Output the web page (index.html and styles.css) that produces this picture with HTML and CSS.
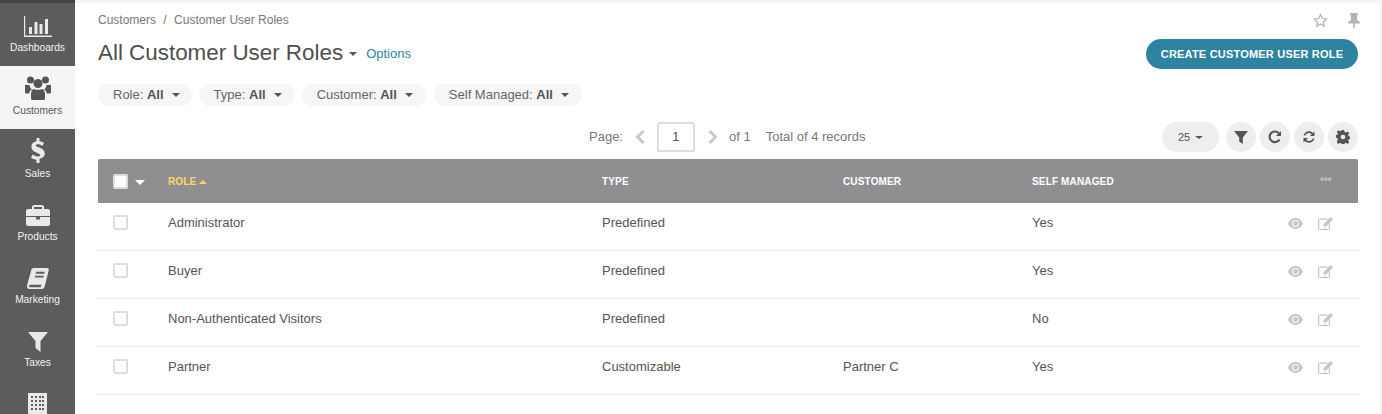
FILE: index.html
```html
<!DOCTYPE html>
<html lang="en">
<head>
    <meta charset="UTF-8">
    <title>All Customer User Roles</title>
    <link rel="stylesheet" href="styles.css">
</head>
<body>
    <nav class="sidebar">
        <a class="side-item" href="#">
            <svg class="side-icon" width="28" height="21" viewBox="0 0 28 21"><path d="M0 0h1.200v19.500H28V21H0z"/><path d="M5 11h3v7H5zM10.500 6h3v12h-3zM15.500 8h3v10h-3zM21 3h3v15h-3z"/></svg>
            <span>Dashboards</span>
        </a>
        <a class="side-item active" href="#">
            <svg class="side-icon" width="26" height="24" viewBox="0 0 26 24"><circle cx="5.500" cy="4" r="3.500"/><circle cx="20.500" cy="4" r="3.500"/><circle cx="13" cy="7.500" r="4.500"/><path d="M0 9h4.500c.5 2 1 3.500 2.500 4.500-2 1-2.500 2-2.800 4H1.500C.5 17.500 0 17 0 16zM26 9h-4.500c-.5 2-1 3.500-2.500 4.500 2 1 2.500 2 2.800 4h2.700c1 0 1.500-.5 1.500-1.500z"/><path d="M8.500 13c1.500 1 7.500 1 9 0 1.500 1 2.500 2.500 2.500 5v4.500c0 1-1 1.500-2 1.500H8c-1 0-2-.5-2-1.500V18c0-2.500 1-4 2.500-5z"/></svg>
            <span>Customers</span>
        </a>
        <a class="side-item" href="#">
            <svg class="side-icon" width="14" height="25" viewBox="0 0 14 25"><path d="M5.500 0h3v3.200c1.700.2 3.200.8 4.500 1.600l-1.500 3C10 6.900 8.500 6.300 6.800 6.300c-1.300 0-2 .5-2 1.300 0 2.200 9 1.800 9 8 0 2.800-2 4.700-5.300 5.200V25h-3v-3.200c-2-.2-4-1.100-5.500-2.400l1.800-2.800c1.500 1.200 3.200 2 5 2 1.500 0 2.400-.6 2.400-1.600C9.200 14.500.4 15 .4 8.400c0-2.700 2-4.700 5.100-5.200z"/></svg>
            <span>Sales</span>
        </a>
        <a class="side-item" href="#">
            <svg class="side-icon" width="24" height="21" viewBox="0 0 24 21"><path d="M8 0h8c1 0 2 1 2 2v2h4c1 0 2 1 2 2v5H0V6c0-1 1-2 2-2h4V2c0-1 1-2 2-2zm0 2v2h8V2z" fill-rule="evenodd"/><path d="M0 12h10v2.500h4V12h10v7c0 1-1 2-2 2H2c-1 0-2-1-2-2z"/></svg>
            <span>Products</span>
        </a>
        <a class="side-item" href="#">
            <svg class="side-icon" width="22" height="21" viewBox="0 0 23 22"><path d="M7 0h14c1.500 0 2 1 1.700 2.500l-4 16c-.4 1.500-1.200 3.500-3.200 3.500H3c-2 0-3-1-3-3 0-.7.200-1.500.4-2.300L4.500 2C4.800.8 5.800 0 7 0zm2.500 4-.5 2h9l.5-2zm-1 4-.5 2h9l.5-2zM3.500 17.500c-.8 0-1.300.4-1.300 1.300s.5 1.400 1.300 1.400h10.700c.4-.8.600-1.800.8-2.700z" fill-rule="evenodd"/></svg>
            <span>Marketing</span>
        </a>
        <a class="side-item" href="#">
            <svg class="side-icon" width="20" height="20" viewBox="0 0 20 20"><path d="M0 0h20l-7.500 9v11l-5-4V9z"/></svg>
            <span>Taxes</span>
        </a>
        <a class="side-item side-last" href="#">
            <svg class="side-icon" width="19" height="30" viewBox="0 0 19 30"><path fill-rule="evenodd" d="M0 0h19v30H0zm3 3v2h2V3zm4 0v2h2V3zm4 0v2h2V3zm3 0v2h2V3zM3 7v2h2V7zm4 0v2h2V7zm4 0v2h2V7zm3 0v2h2V7zM3 11v2h2v-2zm4 0v2h2v-2zm4 0v2h2v-2zm3 0v2h2v-2zM3 15v2h2v-2zm4 0v2h2v-2zm4 0v2h2v-2zm3 0v2h2v-2z"/></svg>
        </a>
    </nav>

    <main class="content">
        <div class="top-row">
            <div class="breadcrumbs">Customers <i>/</i> Customer User Roles</div>
            <div class="top-icons">
                <svg width="15" height="15" viewBox="0 0 24 24" fill="none" stroke="#b4b4b4" stroke-width="2"><path d="M12 2.500l2.900 6.300 6.900.8-5.100 4.700 1.400 6.800-6.100-3.400-6.100 3.400 1.400-6.800-5.100-4.700 6.900-.8z"/></svg>
                <svg width="12" height="15" viewBox="0 0 12 15" fill="#b4b4b4"><path d="M2 0h8v1.500L9 2.500V7c1.500 1 3 1.500 3 3.500H6.800V15h-1.600v-4.500H0C0 8.500 1.500 8 3 7V2.500L2 1.500z"/></svg>
            </div>
        </div>

        <div class="title-row">
            <h1>All Customer User Roles</h1>
            <span class="caret title-caret"></span>
            <a class="options" href="#">Options</a>
            <a class="create-btn" href="#">CREATE CUSTOMER USER ROLE</a>
        </div>

        <div class="filters">
            <div class="filter">Role: <b>All</b><span class="caret"></span></div>
            <div class="filter">Type: <b>All</b><span class="caret"></span></div>
            <div class="filter">Customer: <b>All</b><span class="caret"></span></div>
            <div class="filter">Self Managed: <b>All</b><span class="caret"></span></div>
        </div>

        <div class="toolbar">
            <div class="pager">
                <span>Page:</span>
                <svg class="chev" width="11" height="14" viewBox="0 0 11 14"><path d="M8.500 1 2.500 7l6 6" /></svg>
                <span class="page-box">1</span>
                <svg class="chev" width="11" height="14" viewBox="0 0 11 14"><path d="M2.500 1l6 6-6 6" /></svg>
                <span>of 1</span>
                <span class="total">Total of 4 records</span>
            </div>
            <div class="tools">
                <div class="per-page">25<span class="caret"></span></div>
                <div class="round-btn"><svg width="14" height="14" viewBox="0 0 14 14"><path d="M0 1h14L8.800 7.500V14l-3.600-2.500v-4z"/></svg></div>
                <div class="round-btn"><svg width="14" height="14" viewBox="0 0 14 14"><path class="arc" d="M11.500 9.500A5.300 5.300 0 1 1 10.800 3.200"/><path d="M13 1v5H8z"/></svg></div>
                <div class="round-btn"><svg width="14" height="14" viewBox="0 0 14 14"><path d="M1.500 5.500C2.200 3 4.400 1.300 7 1.300c1.600 0 3 .6 4 1.700L12.500 1.500V6H8l1.700-1.700C9 3.500 8.100 3.100 7 3.100c-1.800 0-3.200 1-3.700 2.400zM12.500 8.500C11.800 11 9.600 12.700 7 12.700c-1.600 0-3-.6-4-1.700l-1.500 1.500V8H6l-1.700 1.700c.7.800 1.600 1.200 2.700 1.200 1.800 0 3.200-1 3.700-2.400z"/></svg></div>
                <div class="round-btn"><svg width="14" height="14" viewBox="0 0 24 24"><path fill-rule="evenodd" d="M10 0h4l.7 3.400 2.300 1 2.900-1.900 2.800 2.800-1.900 2.900 1 2.300 3.200.7v4l-3.200.7-1 2.300 1.900 2.900-2.800 2.800-2.900-1.900-2.300 1-.7 3H10l-.7-3-2.300-1-2.900 1.900-2.800-2.800L3.200 16l-1-2.300L-1 13V9l3.200-.7 1-2.300-1.900-2.900L4.100 .3l2.900 1.900 2.300-1zM12 8a4 4 0 1 0 0 8 4 4 0 0 0 0-8z"/></svg></div>
            </div>
        </div>

        <table class="grid">
            <thead>
                <tr>
                    <th class="col-check"><span class="check head-check"></span><span class="caret white-caret"></span></th>
                    <th class="col-role sorted">ROLE<span class="sort-up"></span></th>
                    <th class="col-type">TYPE</th>
                    <th class="col-customer">CUSTOMER</th>
                    <th class="col-self">SELF MANAGED</th>
                    <th class="col-actions"><span class="dots">•••</span></th>
                </tr>
            </thead>
            <tbody>
                <tr>
                    <td><span class="check"></span></td>
                    <td>Administrator</td>
                    <td>Predefined</td>
                    <td></td>
                    <td>Yes</td>
                    <td class="actions">
                        <svg width="15" height="11" viewBox="0 0 15 11"><path fill-rule="evenodd" d="M7.500 0C11 0 13.700 2.500 15 5.500 13.700 8.500 11 11 7.500 11S1.300 8.500 0 5.500C1.300 2.500 4 0 7.500 0zm0 2a3.500 3.500 0 1 0 0 7 3.500 3.500 0 0 0 0-7z"/><circle cx="7.500" cy="5.500" r="2.500"/></svg>
                        <svg width="15" height="13" viewBox="0 0 15 13"><path d="M2 1.500h8L8.800 2.700H2.200c-.6 0-1 .4-1 1v7c0 .6.400 1 1 1h7.600c.6 0 1-.4 1-1V7.500L12 6.300V11c0 1.100-.9 2-2 2H2c-1.100 0-2-.9-2-2V3.500c0-1.100.9-2 2-2z"/><path d="M12.500 0 15 2.500 8 9.500H5.500V7z"/></svg>
                    </td>
                </tr>
                <tr>
                    <td><span class="check"></span></td>
                    <td>Buyer</td>
                    <td>Predefined</td>
                    <td></td>
                    <td>Yes</td>
                    <td class="actions">
                        <svg width="15" height="11" viewBox="0 0 15 11"><path fill-rule="evenodd" d="M7.500 0C11 0 13.700 2.500 15 5.500 13.700 8.500 11 11 7.500 11S1.300 8.500 0 5.500C1.300 2.500 4 0 7.500 0zm0 2a3.500 3.500 0 1 0 0 7 3.500 3.500 0 0 0 0-7z"/><circle cx="7.500" cy="5.500" r="2.500"/></svg>
                        <svg width="15" height="13" viewBox="0 0 15 13"><path d="M2 1.500h8L8.800 2.700H2.200c-.6 0-1 .4-1 1v7c0 .6.400 1 1 1h7.600c.6 0 1-.4 1-1V7.500L12 6.300V11c0 1.100-.9 2-2 2H2c-1.100 0-2-.9-2-2V3.500c0-1.100.9-2 2-2z"/><path d="M12.500 0 15 2.500 8 9.500H5.500V7z"/></svg>
                    </td>
                </tr>
                <tr>
                    <td><span class="check"></span></td>
                    <td>Non-Authenticated Visitors</td>
                    <td>Predefined</td>
                    <td></td>
                    <td>No</td>
                    <td class="actions">
                        <svg width="15" height="11" viewBox="0 0 15 11"><path fill-rule="evenodd" d="M7.500 0C11 0 13.700 2.500 15 5.500 13.700 8.500 11 11 7.500 11S1.300 8.500 0 5.500C1.300 2.500 4 0 7.500 0zm0 2a3.500 3.500 0 1 0 0 7 3.500 3.500 0 0 0 0-7z"/><circle cx="7.500" cy="5.500" r="2.500"/></svg>
                        <svg width="15" height="13" viewBox="0 0 15 13"><path d="M2 1.500h8L8.800 2.700H2.200c-.6 0-1 .4-1 1v7c0 .6.400 1 1 1h7.600c.6 0 1-.4 1-1V7.500L12 6.300V11c0 1.100-.9 2-2 2H2c-1.100 0-2-.9-2-2V3.500c0-1.100.9-2 2-2z"/><path d="M12.500 0 15 2.500 8 9.500H5.500V7z"/></svg>
                    </td>
                </tr>
                <tr>
                    <td><span class="check"></span></td>
                    <td>Partner</td>
                    <td>Customizable</td>
                    <td>Partner C</td>
                    <td>Yes</td>
                    <td class="actions">
                        <svg width="15" height="11" viewBox="0 0 15 11"><path fill-rule="evenodd" d="M7.500 0C11 0 13.700 2.500 15 5.500 13.700 8.500 11 11 7.500 11S1.300 8.500 0 5.500C1.300 2.500 4 0 7.500 0zm0 2a3.500 3.500 0 1 0 0 7 3.500 3.500 0 0 0 0-7z"/><circle cx="7.500" cy="5.500" r="2.500"/></svg>
                        <svg width="15" height="13" viewBox="0 0 15 13"><path d="M2 1.500h8L8.800 2.700H2.200c-.6 0-1 .4-1 1v7c0 .6.400 1 1 1h7.600c.6 0 1-.4 1-1V7.500L12 6.300V11c0 1.100-.9 2-2 2H2c-1.100 0-2-.9-2-2V3.500c0-1.100.9-2 2-2z"/><path d="M12.500 0 15 2.500 8 9.500H5.500V7z"/></svg>
                    </td>
                </tr>
            </tbody>
        </table>
    </main>
</body>
</html>
```

FILE: styles.css
```css
html {
    height: 414px;
    overflow: hidden;
}

body {
    margin: 0;
    display: flex;
    height: 414px;
    overflow: hidden;
    background-color: #f5f5f5;
    font-family: "Liberation Sans", Arial, sans-serif;
    font-size: 13px;
    color: #555;
}

.sidebar {
    width: 75px;
    height: 414px;
    flex-shrink: 0;
    padding-top: 3px;
    box-sizing: border-box;
    overflow: hidden;
    background-color: #5c5c5d;
    box-shadow: inset 0 3px 0 #444;
}

.side-item {
    display: flex;
    flex-direction: column;
    align-items: center;
    justify-content: flex-end;
    height: 63px;
    padding-bottom: 12px;
    box-sizing: border-box;
    color: #f2f2f2;
    font-size: 10.2px;
    line-height: 13px;
    text-decoration: none;
}

.side-icon {
    flex-shrink: 0;
    margin-bottom: 4px;
    fill: #e9e9e9;
}

.side-item.active {
    background-color: #f5f5f5;
    color: #555;
}

.side-item.active .side-icon {
    fill: #555;
}

.side-last {
    justify-content: flex-start;
    padding-top: 12px;
}

.content {
    width: 1305px;
    height: 411px;
    margin-top: 3px;
    padding: 0 22px 0 23px;
    box-sizing: border-box;
    overflow: hidden;
    background-color: #fff;
}

.top-row {
    display: flex;
    justify-content: space-between;
    align-items: center;
    height: 24px;
    padding-top: 5px;
}

.breadcrumbs {
    font-size: 12px;
    color: #777;
}

.breadcrumbs i {
    font-style: normal;
    margin: 0 4px;
}

.top-icons {
    display: flex;
    align-items: center;
    gap: 20px;
    margin-right: -2px;
}

.title-row {
    display: flex;
    align-items: center;
    height: 32px;
    margin-top: 6px;
}

h1 {
    margin: -2px 0 0;
    font-size: 22.4px;
    font-weight: normal;
    color: #4f4f4f;
}

.title-caret {
    margin-left: 6px;
    margin-top: -1px;
}

.options {
    margin-left: 9px;
    margin-top: -1px;
    color: #2d839e;
    text-decoration: none;
    font-size: 13px;
}

.create-btn {
    margin-left: auto;
    display: block;
    width: 212px;
    height: 30px;
    border-radius: 15px;
    background-color: #2e84a0;
    color: #fff;
    font-size: 11px;
    font-weight: bold;
    line-height: 30px;
    text-align: center;
    text-decoration: none;
    letter-spacing: .2px;
}

.caret {
    display: inline-block;
    width: 0;
    height: 0;
    border-left: 4px solid transparent;
    border-right: 4px solid transparent;
    border-top: 4px solid #555;
}

.filters {
    display: flex;
    gap: 7px;
    margin-top: 14px;
}

.filter {
    height: 22px;
    padding: 0 13px 0 15px;
    border-radius: 11px;
    background-color: #f6f6f6;
    line-height: 22px;
    color: #666;
}

.filter:first-child {
    padding-right: 12px;
}

.filter:last-child {
    margin-left: 1px;
}

.filter b {
    color: #555;
}

.filter .caret {
    margin-left: 8px;
    vertical-align: 2px;
}

.toolbar {
    display: flex;
    align-items: center;
    height: 30px;
    margin-top: 16px;
    padding-left: 491px;
}

.pager {
    display: flex;
    align-items: center;
    color: #777;
}

.pager > span {
    margin-bottom: 2px;
}

.chev {
    margin: 0 11px 0 12px;
    fill: none;
    stroke: #c9c9c9;
    stroke-width: 3;
}

.pager > .page-box {
    width: 34px;
    height: 26px;
    margin-bottom: 0;
    border: 2px solid #ddd;
    border-radius: 2px;
    line-height: 26px;
    text-align: center;
    color: #5a4a5e;
}

.total {
    margin-left: 15px;
}

.tools {
    display: flex;
    gap: 4px;
    margin-left: auto;
}

.per-page {
    width: 57px;
    height: 30px;
    margin-right: 3px;
    border-radius: 15px;
    background-color: #eee;
    font-size: 11px;
    line-height: 30px;
    text-align: center;
}

.per-page .caret {
    margin-left: 5px;
    vertical-align: 2px;
    border-width: 3px 4px 0;
}

.round-btn {
    display: flex;
    align-items: center;
    justify-content: center;
    width: 30px;
    height: 30px;
    border-radius: 50%;
    background-color: #eee;
}

.round-btn svg {
    fill: #555;
}

.round-btn .arc {
    fill: none;
    stroke: #555;
    stroke-width: 2.2;
}

.grid {
    width: 100%;
    margin-top: 7px;
    border-collapse: separate;
    border-spacing: 0;
    table-layout: fixed;
}

.grid th {
    height: 44px;
    padding: 0;
    background-color: #8f8f91;
    color: #fff;
    font-size: 10px;
    font-weight: bold;
    text-align: left;
    letter-spacing: .15px;
}

.grid th:first-child {
    border-radius: 2px 0 0 0;
}

.grid th:last-child {
    border-radius: 0 2px 0 0;
}

.grid th.col-check {
    width: 70px;
    box-sizing: border-box;
}

.col-role {
    width: 434px;
}

.col-type {
    width: 241px;
}

.col-customer {
    width: 189px;
}

.col-self {
    width: 246px;
}

.grid th.sorted {
    color: #fdd36c;
}

.sort-up {
    display: inline-block;
    width: 0;
    height: 0;
    margin-left: 3px;
    vertical-align: 1px;
    border-left: 4px solid transparent;
    border-right: 4px solid transparent;
    border-bottom: 4px solid #fdd36c;
}

.dots {
    display: block;
    padding: 0 0 4px 42px;
    font-size: 12px;
    color: #bbb;
    letter-spacing: -.5px;
}

.grid td {
    height: 48px;
    padding: 0 0 8px;
    box-sizing: border-box;
    border-bottom: 1px solid #e9e9e9;
    color: #555;
    font-size: 13px;
}

.grid td:first-child, .grid th:first-child {
    padding-left: 15px;
}

.check {
    display: block;
    width: 11px;
    height: 11px;
    border: 2px solid #ddd;
    border-radius: 2px;
    background-color: #fff;
}

.head-check {
    display: inline-block;
    vertical-align: middle;
}

.white-caret {
    margin-left: 7px;
    vertical-align: -1px;
    border-left-width: 5px;
    border-right-width: 5px;
    border-top: 5px solid #fff;
}

.actions {
    white-space: nowrap;
}

.actions svg {
    fill: #c6c6c6;
    vertical-align: middle;
}

.actions svg:first-child {
    margin-left: 10px;
    margin-right: 11px;
}
```
